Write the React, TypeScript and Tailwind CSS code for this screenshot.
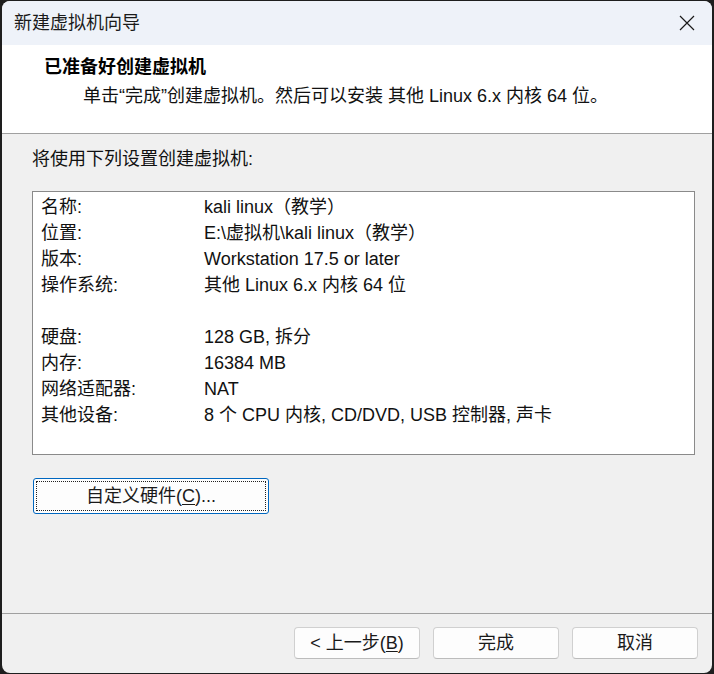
import React from 'react';

const rows: { label: string; value: string }[] = [
  { label: '名称:', value: 'kali linux（教学）' },
  { label: '位置:', value: 'E:\\虚拟机\\kali linux（教学）' },
  { label: '版本:', value: 'Workstation 17.5 or later' },
  { label: '操作系统:', value: '其他 Linux 6.x 内核 64 位' },
  { label: '', value: '' },
  { label: '硬盘:', value: '128 GB, 拆分' },
  { label: '内存:', value: '16384 MB' },
  { label: '网络适配器:', value: 'NAT' },
  { label: '其他设备:', value: '8 个 CPU 内核, CD/DVD, USB 控制器, 声卡' },
];

const FooterButton: React.FC<{ children: React.ReactNode }> = ({ children }) => (
  <button className="w-[126px] h-[32px] rounded-[4px] border border-[#d0d0d0] border-b-[#bcbcbc] bg-[#fdfdfd] text-[18px] leading-none text-[#1a1a1a]">
    {children}
  </button>
);

const App: React.FC = () => {
  return (
    <div className="w-[714px] h-[674px] bg-[#1e1e1e] py-px px-[2px] font-['Liberation_Sans','Noto_Sans_CJK_SC',sans-serif] text-[#111]">
      <div className="flex flex-col h-full rounded-[8px] overflow-hidden bg-[#f0f0f0]">
        {/* title bar */}
        <div className="h-[44px] shrink-0 bg-[#eef2f9] flex items-center justify-between pl-[12px] pr-[16px]">
          <span className="text-[18px] leading-none text-[#1a1a1a]">新建虚拟机向导</span>
          <svg width="16" height="16" viewBox="0 0 16 16" className="mr-[1px]">
            <path d="M1 1L15 15M15 1L1 15" stroke="#1a1a1a" strokeWidth="1.2" fill="none" />
          </svg>
        </div>

        {/* header */}
        <div className="h-[89px] shrink-0 bg-white border-b border-[#a0a0a0] pt-[9px]">
          <div className="pl-[42px] text-[18px] leading-[26px] font-bold text-black">已准备好创建虚拟机</div>
          <div className="pl-[81px] mt-[3px] text-[18px] leading-[26px]">
            单击“完成”创建虚拟机。然后可以安装 其他 Linux 6.x 内核 64 位。
          </div>
        </div>

        {/* body */}
        <div className="flex-1 px-[30px] pt-[12px]">
          <div className="text-[18px] leading-[26px]">将使用下列设置创建虚拟机:</div>
          <div className="mt-[19px] w-[663px] h-[264px] bg-white border border-[#8a8a8a] pt-[2px]">
            {rows.map((row, i) => (
              <div key={i} className="grid grid-cols-[171px_1fr] h-[26px] text-[18px] leading-[26px]">
                <span className="pl-[8px]">{row.label}</span>
                <span>{row.value}</span>
              </div>
            ))}
          </div>
          <button className="relative mt-[23px] ml-[1px] w-[236px] h-[36px] rounded-[3px] border border-[#0067c0] bg-[#fdfdfd] text-[18px] leading-none text-[#1a1a1a]">
            <span className="absolute inset-[2px] border border-dotted border-[#222]"></span>
            自定义硬件(<span className="underline underline-offset-2">C</span>)...
          </button>
        </div>

        {/* footer */}
        <div className="shrink-0 h-[60px] border-t border-[#a0a0a0] pt-[13px] pr-[14px] flex justify-end gap-[13px]">
          <FooterButton>
            &lt; 上一步(<span className="underline underline-offset-2">B</span>)
          </FooterButton>
          <FooterButton>完成</FooterButton>
          <FooterButton>取消</FooterButton>
        </div>
      </div>
    </div>
  );
};

export default App;
